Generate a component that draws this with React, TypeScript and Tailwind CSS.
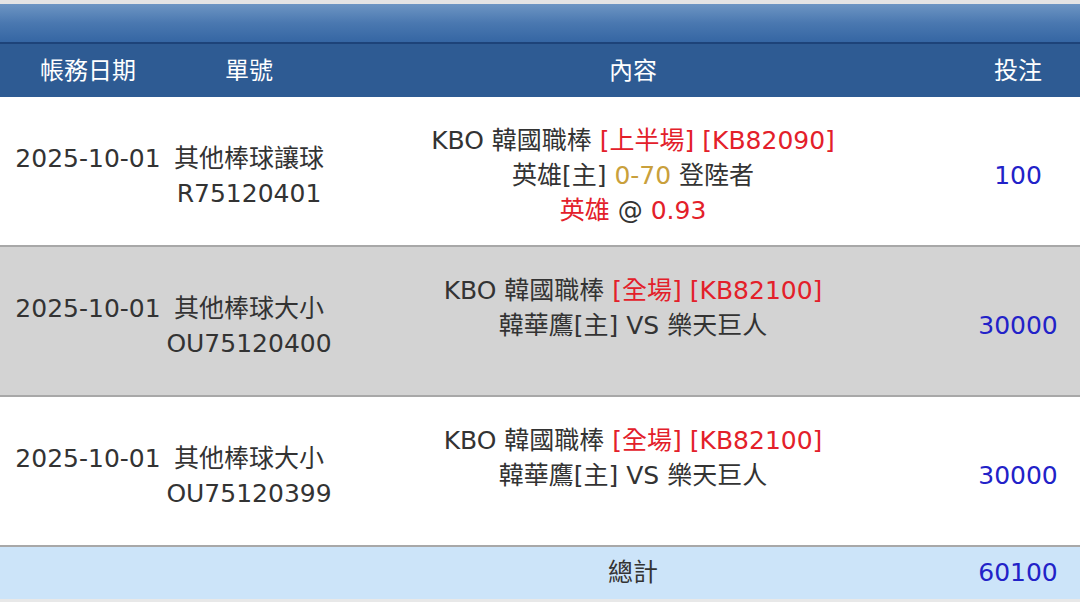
const FONT = { fontFamily: '"DejaVu Sans", "Noto Sans CJK TC", sans-serif' };

interface Bet {
    date: string;
    type: string;
    no: string;
    period: string;
    code: string;
    line2: React.ReactNode;
    line3?: React.ReactNode;
    amount: string;
    shaded: boolean;
}

const bets: Bet[] = [
    {
        date: "2025-10-01",
        type: "其他棒球讓球",
        no: "R75120401",
        period: "[上半場]",
        code: "[KB82090]",
        line2: (
            <>
                英雄[主] <span className="text-[#c9a03c]">0-70</span> 登陸者
            </>
        ),
        line3: (
            <>
                <span className="text-[#e3202a]">英雄</span> @ <span className="text-[#e3202a]">0.93</span>
            </>
        ),
        amount: "100",
        shaded: false,
    },
    {
        date: "2025-10-01",
        type: "其他棒球大小",
        no: "OU75120400",
        period: "[全場]",
        code: "[KB82100]",
        line2: <>韓華鷹[主] VS 樂天巨人</>,
        amount: "30000",
        shaded: true,
    },
    {
        date: "2025-10-01",
        type: "其他棒球大小",
        no: "OU75120399",
        period: "[全場]",
        code: "[KB82100]",
        line2: <>韓華鷹[主] VS 樂天巨人</>,
        amount: "30000",
        shaded: false,
    },
];

const cols = "grid grid-cols-[176px_146px_622px_136px]";

export default function App() {
    return (
        <div className="w-[1080px] h-[602px] overflow-hidden bg-[#e8e8e8] text-[25px] text-[#333]" style={FONT}>
            <div className="h-[4px] bg-[#e4e4e4]" />
            <div className="h-[40px] bg-gradient-to-b from-[#6d95c3] via-[#4a78b0] to-[#3566a3] border-b-2 border-[#1d4379]" />
            <div className={`${cols} h-[53px] items-center bg-[#2e5b93] text-white text-[24px]`}>
                <div className="text-center">帳務日期</div>
                <div className="text-center">單號</div>
                <div className="text-center">內容</div>
                <div className="text-center pl-[12px]">投注</div>
            </div>
            {bets.map((b, i) => (
                <div
                    key={i}
                    className={`${cols} h-[150px] items-center pt-[9px] border-b-2 border-[#a8a8a8] leading-[35px] whitespace-nowrap ${
                        b.shaded ? "bg-[#d3d3d3]" : "bg-white"
                    }`}
                >
                    <div className="text-center mb-[35px]">{b.date}</div>
                    <div className="flex flex-col items-center">
                        <div>{b.type}</div>
                        <div>{b.no}</div>
                    </div>
                    <div className="flex flex-col items-center">
                        <div>
                            KBO 韓國職棒 <span className="text-[#e3202a]">{b.period} {b.code}</span>
                        </div>
                        <div>{b.line2}</div>
                        <div className="h-[35px]">{b.line3}</div>
                    </div>
                    <div className="text-center pl-[12px] text-[#2222c8]">{b.amount}</div>
                </div>
            ))}
            <div className={`${cols} h-[52px] items-center bg-[#cce4f9]`}>
                <div />
                <div />
                <div className="text-center">總計</div>
                <div className="text-center pl-[12px] text-[#2222c8]">60100</div>
            </div>
        </div>
    );
}
